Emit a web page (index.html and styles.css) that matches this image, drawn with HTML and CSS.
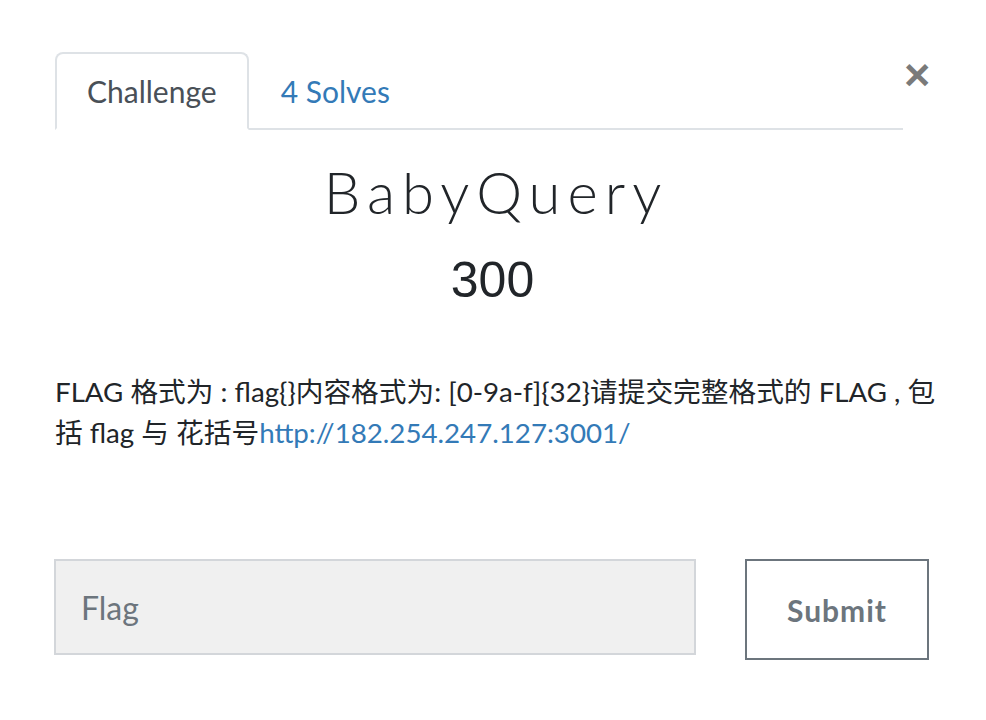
FILE: index.html
```html
<!DOCTYPE html>
<html lang="zh">
<head>
<meta charset="utf-8">
<title>BabyQuery</title>
<link rel="stylesheet" href="styles.css">
</head>
<body>
<div class="modal">
  <div class="head">
    <ul class="tabs">
      <li class="tab active">Challenge</li>
      <li class="tab">4 Solves</li>
    </ul>
    <button class="close" type="button">×</button>
  </div>
  <h1 class="title">BabyQuery</h1>
  <h2 class="value">300</h2>
  <p class="desc">FLAG 格式为 : flag{}内容格式为: [0-9a-f]{32}请提交完整格式的 FLAG , 包括 flag 与 花括号<a href="#">http://182.254.247.127:3001/</a></p>
  <form class="submit-row">
    <input class="flag" type="text" placeholder="Flag">
    <button class="btn" type="button">Submit</button>
  </form>
</div>
</body>
</html>
```
FILE: styles.css
```css
html, body {
  margin: 0;
  padding: 0;
  background: #fff;
}
body {
  font-family: Lato, "Noto Sans CJK SC", sans-serif;
  color: #212529;
}
.modal {
  padding: 52px 56px 0 55px;
}
.head {
  display: flex;
  align-items: flex-start;
}
.tabs {
  flex: 1;
  display: flex;
  list-style: none;
  margin: 0;
  padding: 0;
  border-bottom: 2px solid #dee2e6;
}
.tab {
  font-size: 30px;
  line-height: 42px;
  padding: 16px 30px;
  margin-bottom: -2px;
  color: #337ab7;
  border: 2px solid transparent;
  border-radius: 8px 8px 0 0;
}
.tab.active {
  color: #495057;
  border-color: #dee2e6 #dee2e6 #fff;
}
.close {
  background: none;
  border: 0;
  padding: 0;
  margin: 2px 0 0 1px;
  width: 26px;
  font-family: "Liberation Sans", sans-serif;
  font-size: 45px;
  line-height: 42px;
  font-weight: 700;
  color: #7a7a7a;
}
.title {
  margin: 26px 0 0;
  text-align: center;
  font-family: Lato, sans-serif;
  font-weight: 300;
  font-size: 58px;
  letter-spacing: 7px;
  text-indent: 7px;
  line-height: 72px;
  color: #212529;
}
.value {
  margin: 22px 0 0;
  text-align: center;
  font-family: "Liberation Sans", sans-serif;
  font-weight: 400;
  font-size: 50px;
  line-height: 60px;
  color: #212529;
}
.desc {
  margin: 61px -10px 0 0;
  font-size: 27.7px;
  line-height: 41px;
}
.desc a {
  color: #337ab7;
  text-decoration: none;
}
.submit-row {
  display: flex;
  align-items: flex-start;
  gap: 49px;
  margin-top: 106px;
  margin-left: -1px;
}
.flag {
  box-sizing: border-box;
  width: 642px;
  height: 96px;
  background: #f0f0f0;
  border: 2px solid #d3d6da;
  padding: 0 25px;
  font-family: Lato, sans-serif;
  font-size: 32px;
  color: #495057;
  outline: none;
}
.flag::placeholder {
  color: #6c757d;
}
.btn {
  box-sizing: border-box;
  width: 184px;
  height: 101px;
  background: #fff;
  border: 2px solid #6c757d;
  font-family: Lato, sans-serif;
  font-weight: 700;
  font-size: 30px;
  letter-spacing: 1px;
  color: #6c757d;
}
```
